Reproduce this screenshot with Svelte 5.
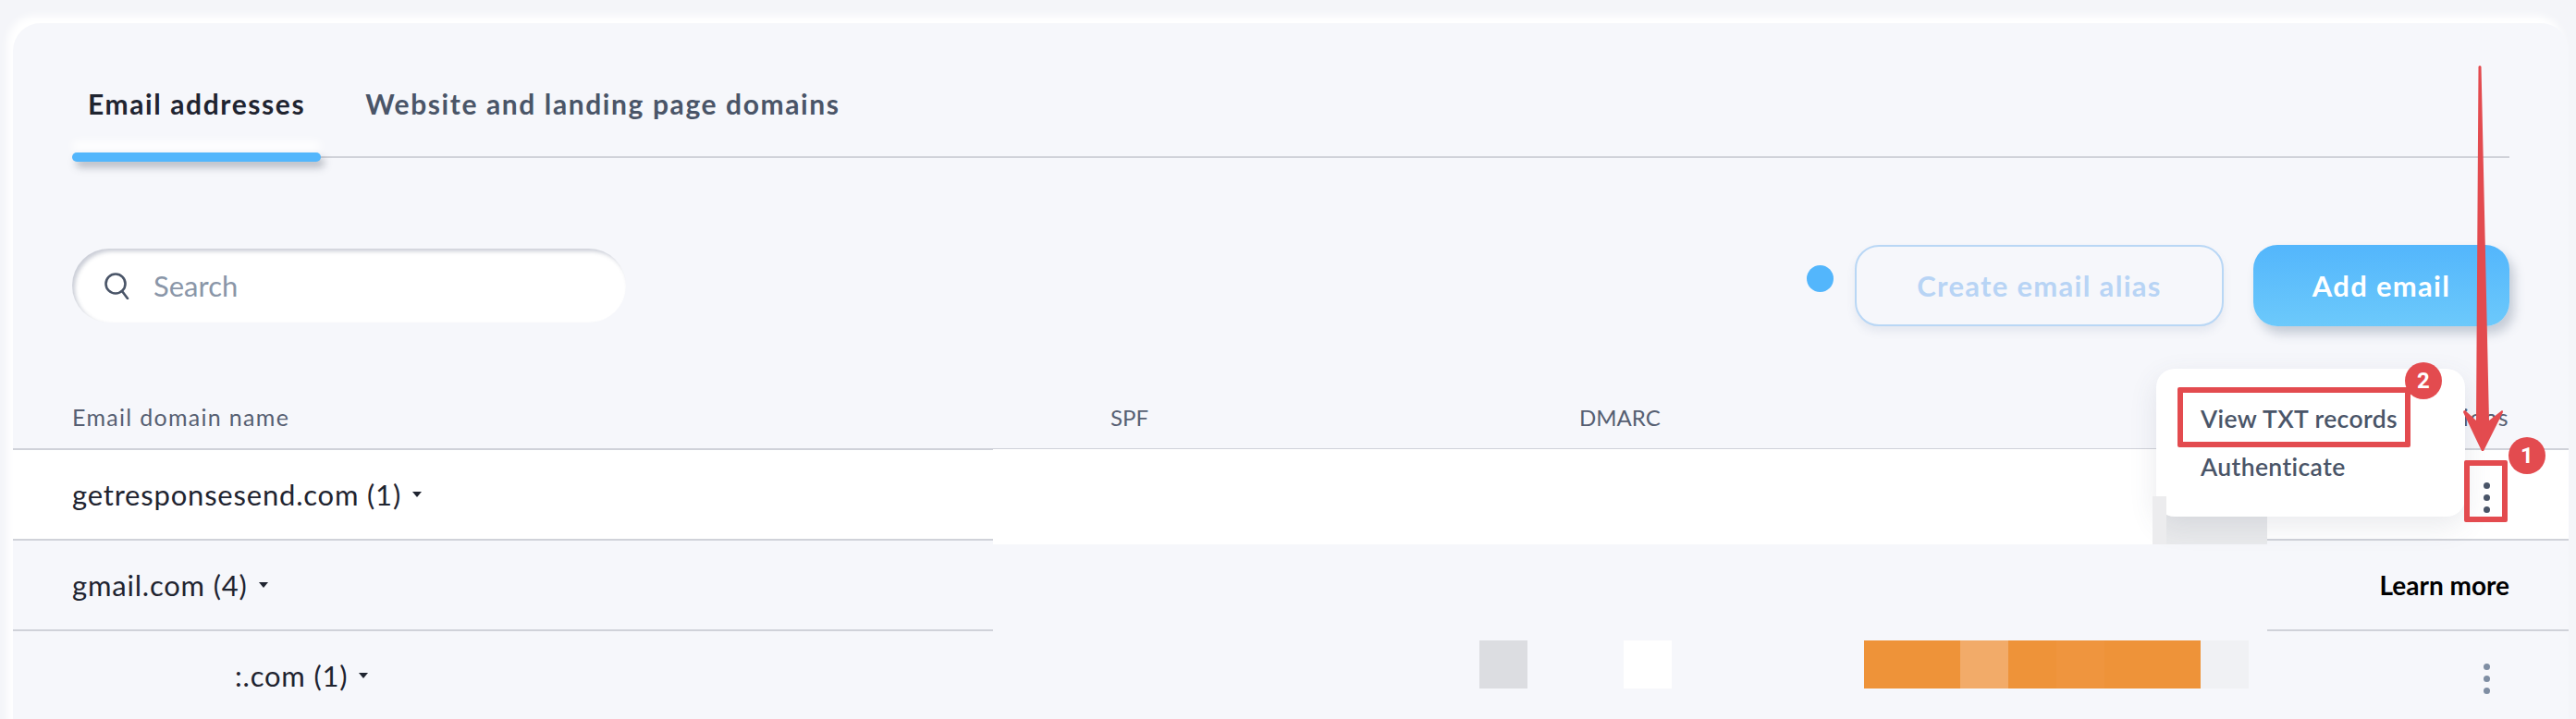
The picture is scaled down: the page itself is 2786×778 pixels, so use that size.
<script>
	const rows = [
		{ name: 'getresponsesend.com (1)', white: true, menu: 'dark' },
		{ name: 'gmail.com (4)', learn: true },
		{ name: ':.com (1)', indent: true, menu: 'light' }
	];
	const tiles = ['#ee9339', '#ee9339', '#f2ab69', '#ee9339', '#ef953e', '#ee9339', '#ee9339', '#f0f1f4'];
</script>

<div class="page">
	<main class="card">
		<nav class="tabs">
			<button class="tab active">Email addresses</button>
			<button class="tab">Website and landing page domains</button>
		</nav>

		<div class="toolbar">
			<label class="search">
				<svg width="30" height="30" viewBox="0 0 30 30" fill="none" stroke="#4a5568" stroke-width="2.6" stroke-linecap="round">
					<circle cx="14" cy="13" r="10.5" />
					<path d="M21 21l6 8" />
				</svg>
				<span>Search</span>
			</label>
			<div class="actions">
				<span class="dot"></span>
				<button class="btn ghost">Create email alias</button>
				<button class="btn primary">Add email</button>
			</div>
		</div>

		<div class="thead">
			<span>Email domain name</span>
			<span class="caps">SPF</span>
			<span class="caps">DMARC</span>
			<span class="right">Actions</span>
		</div>

		{#each rows as row}
			<div class="row" class:white={row.white}>
				<span class="name" class:indent={row.indent}>{row.name}<i class="caret"></i></span>
				{#if row.learn}
					<span class="learn">Learn more</span>
				{/if}
				{#if row.menu}
					<span class="kebab" class:light={row.menu === 'light'}><b></b><b></b><b></b></span>
				{/if}
			</div>
		{/each}
	</main>

	<div class="patch patch-white"></div>
	<div class="patch patch-bg"></div>
	<div class="patch patch-grey"></div>

	<div class="mosaic">
		<span class="tile-grey"></span>
		<span class="tile-white"></span>
		<span class="tile-row">
			{#each tiles as color}
				<i style="background: {color}"></i>
			{/each}
		</span>
	</div>

	<div class="menu">
		<span>View TXT records</span>
		<span>Authenticate</span>
	</div>
	<div class="patch patch-grey-left"></div>

	<svg class="arrow" width="60" height="430" viewBox="0 0 60 430">
		<path d="M18.5 2 Q20 0 21.5 2 L30 385 L44 374 Q45 374 45 376 L24 418 L22 418 L2 376 Q2 374 4 374 L16 385 Z" fill="#e34b4f" />
	</svg>
	<div class="mark mark-view"></div>
	<div class="mark mark-kebab"></div>
	<div class="badge badge-two">2</div>
	<div class="badge badge-one">1</div>
</div>

<style>
	:global(body) {
		margin: 0;
		background: #f4f5f9;
	}

	.page {
		position: relative;
		width: 2786px;
		height: 778px;
		overflow: hidden;
		padding: 25px 8px 0 14px;
		box-sizing: border-box;
		font-family: Lato, 'Open Sans', sans-serif;
		color: #1f2430;
	}

	.card {
		position: relative;
		height: 780px;
		background: #f6f7fb;
		border-radius: 30px 30px 0 0;
		box-shadow: -6px -8px 8px #fff;
	}

	.tabs {
		display: flex;
		align-items: flex-start;
		height: 146px;
		margin: 0 64px;
		padding-top: 52px;
		border-bottom: 2px solid #d0d2d9;
		box-sizing: border-box;
	}

	.tab {
		position: relative;
		height: 93px;
		padding: 0 17px 23px;
		margin-right: 31px;
		border: none;
		background: none;
		font: 700 30px Lato, sans-serif;
		letter-spacing: 1.6px;
		color: #4a5568;
	}

	.tab.active {
		color: #1f2430;
	}

	.tab.active::after {
		content: '';
		position: absolute;
		left: 0;
		right: 0;
		bottom: -5px;
		height: 10px;
		border-radius: 5px;
		background: #53b6fc;
		box-shadow: 4px 6px 8px rgba(60, 70, 90, 0.35), 0 -12px 10px #fff;
	}

	.toolbar {
		display: flex;
		justify-content: space-between;
		align-items: center;
		height: 88px;
		margin: 94px 64px 0;
	}

	.search {
		display: flex;
		align-items: center;
		gap: 25px;
		width: 599px;
		height: 80px;
		padding-left: 33px;
		box-sizing: border-box;
		border-radius: 40px;
		background: #fff;
		box-shadow: inset 3px 3px 4px rgba(70, 80, 110, 0.28);
		font-size: 31px;
		color: #8a96a8;
	}

	.actions {
		display: flex;
		align-items: stretch;
		gap: 32px;
		height: 88px;
	}

	.dot {
		width: 29px;
		height: 29px;
		margin: 22px -9px 0 0;
		border-radius: 50%;
		background: #53b6fc;
	}

	.btn {
		border-radius: 26px;
		font: 700 31px Lato, sans-serif;
		letter-spacing: 1.3px;
	}

	.ghost {
		width: 399px;
		border: 2px solid #b9d7f5;
		background: #f6f7fb;
		color: #b8d4f5;
		box-shadow: 0 6px 10px rgba(90, 110, 150, 0.1);
	}

	.primary {
		width: 277px;
		border: none;
		background: linear-gradient(#53b6fc, #6cc9fb);
		color: #fff;
		box-shadow: 5px 8px 12px rgba(70, 90, 120, 0.28);
	}

	.thead {
		display: grid;
		grid-template-columns: 1123px 507px 1fr auto;
		align-items: center;
		height: 134px;
		padding: 64px 64px 0;
		box-sizing: border-box;
		border-bottom: 2px solid #d0d2d9;
		font-size: 25px;
		letter-spacing: 1.3px;
		color: #565f72;
	}

	.caps {
		font-size: 24px;
		letter-spacing: 0;
	}

	.row {
		display: flex;
		align-items: center;
		justify-content: space-between;
		height: 98px;
		padding: 0 64px;
		box-sizing: border-box;
		border-bottom: 2px solid #d0d2d9;
	}

	.row.white {
		background: #fff;
	}

	.name {
		display: flex;
		align-items: center;
		font-size: 31px;
		letter-spacing: 0.8px;
	}

	.name.indent {
		margin-left: 176px;
	}

	.caret {
		width: 0;
		height: 0;
		margin-left: 12px;
		border: 5px solid transparent;
		border-top: 6px solid #1f2430;
		border-bottom: 0;
	}

	.learn {
		font-weight: 700;
		font-size: 28px;
		color: #000;
	}

	.kebab {
		display: flex;
		flex-direction: column;
		gap: 6px;
		margin-right: 21px;
		margin-top: 6px;
	}

	.kebab b {
		width: 7px;
		height: 7px;
		border-radius: 50%;
		background: #4a5568;
	}

	.kebab.light b {
		background: #7f8ea3;
	}

	.patch {
		position: absolute;
	}

	.patch-white {
		left: 1074px;
		top: 486px;
		width: 1378px;
		height: 103px;
		background: #fff;
	}

	.patch-bg {
		left: 1074px;
		top: 589px;
		width: 1378px;
		height: 101px;
		background: #f6f7fb;
	}

	.patch-grey {
		left: 2343px;
		top: 537px;
		width: 109px;
		height: 52px;
		background: #e9eaec;
	}

	.patch-grey-left {
		left: 2328px;
		top: 537px;
		width: 15px;
		height: 52px;
		background: #ececee;
	}

	.mosaic {
		position: absolute;
		left: 1600px;
		top: 693px;
		display: flex;
		height: 52px;
	}

	.mosaic span {
		display: block;
	}

	.tile-grey {
		width: 52px;
		background: #dcdde1;
	}

	.tile-white {
		width: 52px;
		margin-left: 104px;
		background: #fff;
	}

	.tile-row {
		display: flex !important;
		margin-left: 208px;
	}

	.tile-row i {
		width: 52px;
	}

	.menu {
		position: absolute;
		left: 2332px;
		top: 399px;
		display: flex;
		flex-direction: column;
		gap: 20px;
		width: 334px;
		height: 160px;
		padding: 38px 0 0 48px;
		box-sizing: border-box;
		border-radius: 20px;
		background: #fff;
		box-shadow: 0 10px 30px rgba(70, 80, 110, 0.12);
		font-size: 26.5px;
		font-weight: 600;
		letter-spacing: 0.4px;
		color: #4a5568;
	}

	.arrow {
		position: absolute;
		left: 2662px;
		top: 70px;
	}

	.mark {
		position: absolute;
		box-sizing: border-box;
		border: 6px solid #e34b4f;
		border-radius: 2px;
	}

	.mark-view {
		left: 2355px;
		top: 419px;
		width: 252px;
		height: 65px;
	}

	.mark-kebab {
		left: 2665px;
		top: 498px;
		width: 47px;
		height: 67px;
	}

	.badge {
		position: absolute;
		display: flex;
		align-items: center;
		justify-content: center;
		width: 40px;
		height: 40px;
		border-radius: 50%;
		background: #e34b4f;
		color: #fff;
		font: 700 24px Roboto, sans-serif;
	}

	.badge-two {
		left: 2601px;
		top: 392px;
	}

	.badge-one {
		left: 2713px;
		top: 473px;
	}
</style>
